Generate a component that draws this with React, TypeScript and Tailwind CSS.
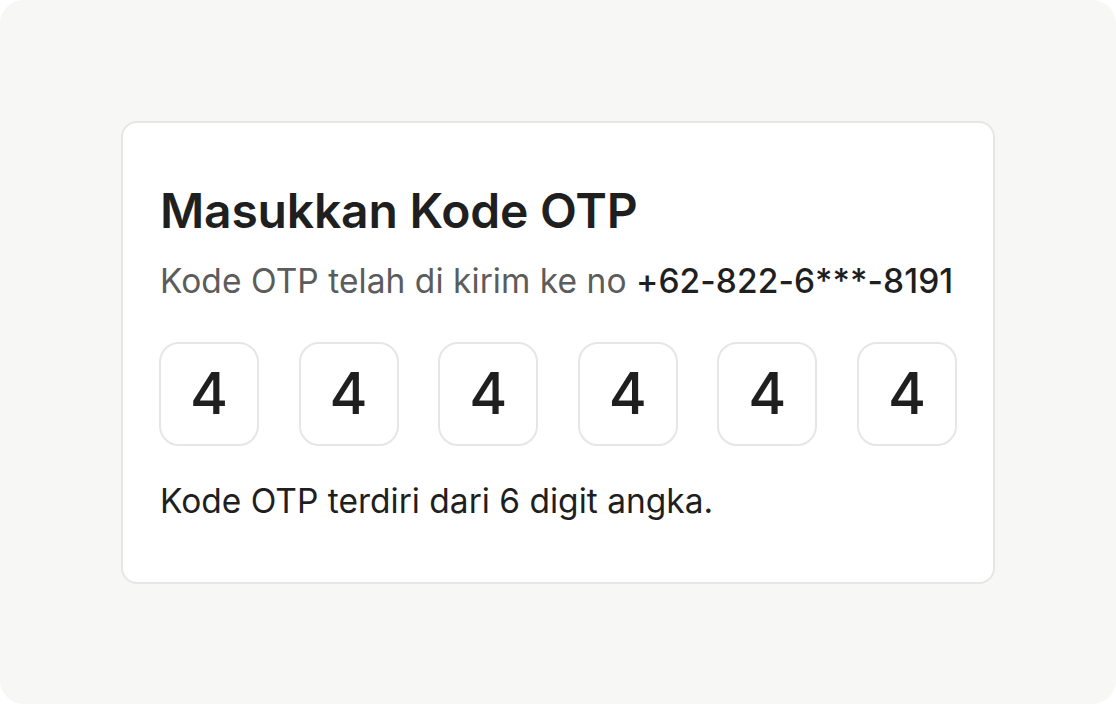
const digits = ["4", "4", "4", "4", "4", "4"]

export default function App() {
  return (
    <div className="w-[1116px] h-[704px] bg-white" style={{ fontFamily: "Inter, 'Noto Sans', sans-serif" }}>
      {/* frame */}
      <div className="w-full h-full rounded-[24px] bg-[#f7f7f5] flex items-center justify-center">
        <div className="w-[874px] bg-white border-2 border-[#e6e6e4] rounded-[16px] px-[36px] pt-[59px] pb-[61px]">
          <h1 className="pl-px text-[48px] leading-[58px] font-semibold text-[#1f1f1f] tracking-[-0.2px]">
            Masukkan Kode OTP
          </h1>
          <p className="pl-px mt-[21px] text-[33.5px] leading-[40px] text-[#5c5c5c] tracking-[0.05px]">
            Kode OTP telah di kirim ke no <span className="text-[#1f1f1f] font-medium">+62-822-6***-8191</span>
          </p>

          <div className="mt-[41px] flex justify-between">
            {digits.map((d, i) => (
              <div
                key={i}
                className="w-[100px] h-[104px] rounded-[20px] border-2 border-[#e6e6e4] flex items-center justify-center text-[58px] font-medium text-[#1f1f1f]"
              >
                {d}
              </div>
            ))}
          </div>

          <p className="pl-px mt-[35px] text-[33.5px] leading-[40px] text-[#1f1f1f]">
            Kode OTP terdiri dari 6 digit angka.
          </p>
        </div>
      </div>
    </div>
  )
}
